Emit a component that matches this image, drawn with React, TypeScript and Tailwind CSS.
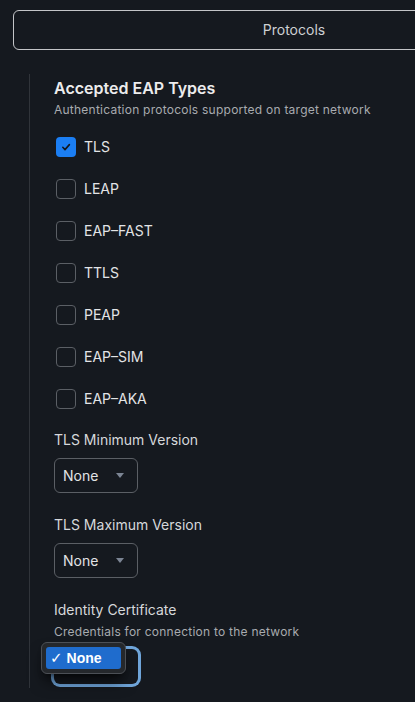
const eapTypes = [
  { name: "TLS", checked: true },
  { name: "LEAP", checked: false },
  { name: "EAP\u2013FAST", checked: false },
  { name: "TTLS", checked: false },
  { name: "PEAP", checked: false },
  { name: "EAP\u2013SIM", checked: false },
  { name: "EAP\u2013AKA", checked: false },
]

function Checkbox({ checked }: { checked: boolean }) {
  if (checked) {
    return (
      <span className="ml-[2px] flex h-5 w-5 items-center justify-center rounded-[4px] bg-[#1b7ef3]">
        <svg width="20" height="20" viewBox="0 0 20 20" fill="none">
          <path d="M6.8 10.3 L9 12.6 L13.4 7.6" stroke="#13171c" strokeWidth="1.6" strokeLinecap="round" strokeLinejoin="round" />
        </svg>
      </span>
    )
  }
  return <span className="ml-[2px] block h-5 w-5 rounded-[4px] border-[1.5px] border-[#5b5f65]" />
}

function Select({ value }: { value: string }) {
  return (
    <div className="mt-2 flex h-[35px] w-[84px] items-center justify-between rounded-md border border-[#5b5f65] pl-[8px] pr-[13px]">
      <span className="text-sm text-[#e2e3e5]">{value}</span>
      <svg width="8" height="5" viewBox="0 0 8 5">
        <path d="M0 0 H8 L4 5 Z" fill="#7c8594" />
      </svg>
    </div>
  )
}

export default function App() {
  return (
    <div
      className="h-[702px] w-[415px] overflow-hidden bg-[#15191f] pl-[13px] pt-[10px]"
      style={{ fontFamily: "Inter, 'Noto Sans', sans-serif" }}
    >
      <div className="flex h-10 w-[562px] items-center justify-center rounded-md border border-[#c3c5c8] text-sm text-[#cdd0d3]">
        Protocols
      </div>

      <div className="ml-4 mt-6 h-[614px] border-l border-[#30343a] pl-6 pt-[2px]">
        <h2 className="text-base leading-6 font-semibold text-[#ececed]">Accepted EAP Types</h2>
        <p className="mt-[2px] text-xs leading-4 tracking-[0.24px] text-[#a8abaf]">
          Authentication protocols supported on target network
        </p>

        <div className="mt-2">
          {eapTypes.map((t) => (
            <div key={t.name} className="flex h-[42px] items-center gap-2">
              <Checkbox checked={t.checked} />
              <span className="text-sm text-[#e3e4e6]">{t.name}</span>
            </div>
          ))}
        </div>

        <div className="mt-[10px] text-sm leading-5 text-[#d6d8db]">TLS Minimum Version</div>
        <Select value="None" />

        <div className="mt-[22px] text-sm leading-5 text-[#d6d8db]">TLS Maximum Version</div>
        <Select value="None" />

        <div className="mt-[22px] text-sm leading-5 text-[#d6d8db]">Identity Certificate</div>
        <p className="mt-[4px] text-xs leading-4 tracking-[0.24px] text-[#a8abaf]">
          Credentials for connection to the network
        </p>

        <div className="relative mt-[9px] h-[35px] w-[84px] rounded-md ring-[3px] ring-[#70a6db]">
          <div className="absolute left-[-13px] top-[-7px] w-[85px] rounded-[6px] border border-[#4c5056] bg-[#25282c] p-1 shadow-lg shadow-black/60">
            <div
              className="flex h-[22px] items-center rounded-[3px] bg-[#1f6ccd] pl-[4px] text-sm font-semibold text-white"
              style={{ fontFamily: "'Liberation Sans', 'DejaVu Sans', sans-serif" }}
            >
              <span className="mr-[4px] text-[15px]">✓</span>None
            </div>
          </div>
        </div>
      </div>
    </div>
  )
}
